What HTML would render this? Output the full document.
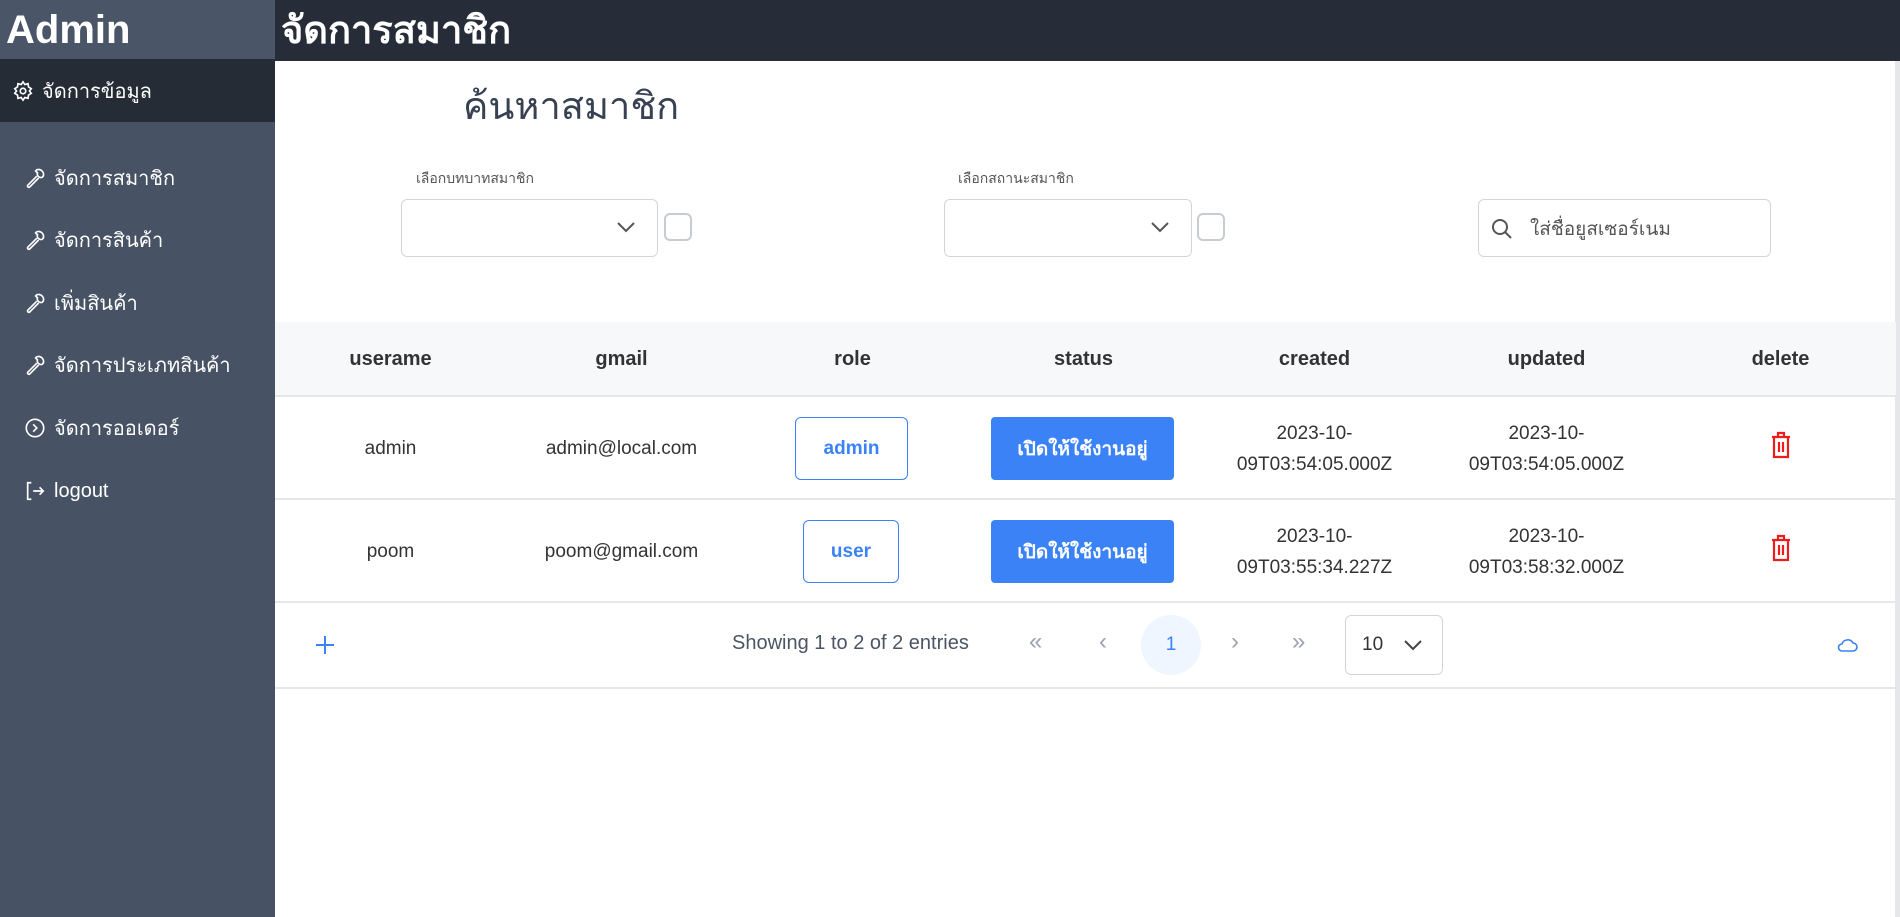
<!DOCTYPE html>
<html><head><meta charset="utf-8"><style>
*{margin:0;padding:0;box-sizing:border-box}
body{width:1900px;height:917px;position:relative;overflow:hidden;background:#fff;font-family:"Liberation Sans","Noto Sans CJK SC",sans-serif;color:#333}
.a{position:absolute}
#side{left:0;top:0;width:275px;height:917px;background:#475264}
#hdr{left:275px;top:0;width:1625px;height:61px;background:#272d38}
.mi{position:absolute;left:24px;color:#fff;font-size:20px;display:flex;align-items:center;gap:8px;height:30px}
.mi svg{width:22px;height:22px}
.th{position:absolute;top:322px;height:74px;width:231px;display:flex;align-items:center;justify-content:center;font-weight:bold;font-size:20px;color:#333}
.td{position:absolute;width:231px;display:flex;align-items:center;justify-content:center;font-size:19px;color:#333;text-align:center;line-height:31px}
.sel{position:absolute;border:1px solid #d1d5db;border-radius:6px;background:#fff}
.cb{position:absolute;border:2px solid #c7ccd3;border-radius:6px;width:28px;height:28px}
.st{position:absolute;left:991px;width:183px;height:63px;background:#3b82f6;border-radius:4px;color:#fff;font-weight:bold;font-size:19px;display:flex;align-items:center;justify-content:center}
.rl{position:absolute;border:1px solid #3b82f6;border-radius:6px;color:#3b82f6;font-weight:bold;font-size:19px;display:flex;align-items:center;justify-content:center;height:63px}
.line{position:absolute;left:275px;width:1621px;height:2px;background:#e5e7eb}
.pg{position:absolute;top:628px;color:#9ca3af;font-size:24px}
</style></head><body>
<div id="side" class="a"></div>
<div class="a" style="left:0;top:0;width:275px;height:59px;background:#4a5567"></div>
<div class="a" style="left:6px;top:8px;color:#fff;font-weight:bold;font-size:40px">Admin</div>
<div class="a" style="left:0;top:59px;width:275px;height:63px;background:#262c36"></div>
<div class="mi" style="left:12px;top:76px"><svg viewBox="0 0 24 24" fill="none" stroke="#fff" stroke-width="1.8"><circle cx="12" cy="12" r="3"/><path d="M12 2l2 3 3.5-1 .5 3.5 3 2-2 2.5 2 2.5-3 2-.5 3.5-3.5-1-2 3-2-3-3.5 1-.5-3.5-3-2 2-2.5-2-2.5 3-2 .5-3.5 3.5 1z"/></svg>จัดการข้อมูล</div>
<div class="mi" style="top:163px"><svg viewBox="0 0 24 24" fill="none" stroke="#fff" stroke-width="1.8"><path d="M14.7 6.3a4 4 0 0 0 5 5L21 10a5.5 5.5 0 0 0-7-7l-1.3 1.3zM14 10L4 20a1.5 1.5 0 0 0 2 2l10-10"/></svg>จัดการสมาชิก</div>
<div class="mi" style="top:225px"><svg viewBox="0 0 24 24" fill="none" stroke="#fff" stroke-width="1.8"><path d="M14.7 6.3a4 4 0 0 0 5 5L21 10a5.5 5.5 0 0 0-7-7l-1.3 1.3zM14 10L4 20a1.5 1.5 0 0 0 2 2l10-10"/></svg>จัดการสินค้า</div>
<div class="mi" style="top:288px"><svg viewBox="0 0 24 24" fill="none" stroke="#fff" stroke-width="1.8"><path d="M14.7 6.3a4 4 0 0 0 5 5L21 10a5.5 5.5 0 0 0-7-7l-1.3 1.3zM14 10L4 20a1.5 1.5 0 0 0 2 2l10-10"/></svg>เพิ่มสินค้า</div>
<div class="mi" style="top:350px"><svg viewBox="0 0 24 24" fill="none" stroke="#fff" stroke-width="1.8"><path d="M14.7 6.3a4 4 0 0 0 5 5L21 10a5.5 5.5 0 0 0-7-7l-1.3 1.3zM14 10L4 20a1.5 1.5 0 0 0 2 2l10-10"/></svg>จัดการประเภทสินค้า</div>
<div class="mi" style="top:413px"><svg viewBox="0 0 24 24" fill="none" stroke="#fff" stroke-width="1.8"><circle cx="12" cy="12" r="9.5"/><path d="M10 8l4 4-4 4"/></svg>จัดการออเดอร์</div>
<div class="mi" style="top:476px"><svg viewBox="0 0 24 24" fill="none" stroke="#fff" stroke-width="1.8"><path d="M8 3H4v18h4M10 12h11M17 8l4 4-4 4"/></svg>logout</div>

<div id="hdr" class="a"></div>
<div class="a" style="left:281px;top:-1px;color:#fff;font-weight:bold;font-size:38px">จัดการสมาชิก</div>
<div class="a" style="left:1895px;top:61px;width:5px;height:856px;background:#e5e7eb"></div>

<div class="a" style="left:463px;top:75px;font-size:38px;color:#374151">ค้นหาสมาชิก</div>
<div class="a" style="left:416px;top:168px;font-size:14px;color:#555">เลือกบทบาทสมาชิก</div>
<div class="sel" style="left:401px;top:199px;width:257px;height:58px"></div>
<svg class="a" style="left:616px;top:220px" width="20" height="14" viewBox="0 0 20 14"><path d="M2 3l8 8 8-8" fill="none" stroke="#555" stroke-width="2"/></svg>
<div class="cb" style="left:664px;top:213px"></div>
<div class="a" style="left:958px;top:168px;font-size:14px;color:#555">เลือกสถานะสมาชิก</div>
<div class="sel" style="left:944px;top:199px;width:248px;height:58px"></div>
<svg class="a" style="left:1150px;top:220px" width="20" height="14" viewBox="0 0 20 14"><path d="M2 3l8 8 8-8" fill="none" stroke="#555" stroke-width="2"/></svg>
<div class="cb" style="left:1197px;top:213px"></div>
<div class="sel" style="left:1478px;top:199px;width:293px;height:58px"></div>
<svg class="a" style="left:1490px;top:217px" width="24" height="24" viewBox="0 0 24 24"><circle cx="10" cy="10" r="7" fill="none" stroke="#555" stroke-width="2"/><path d="M15 15l6 6" stroke="#555" stroke-width="2"/></svg>
<div class="a" style="left:1530px;top:214px;font-size:19px;color:#555">ใส่ชื่อยูสเซอร์เนม</div>

<div class="a" style="left:275px;top:322px;width:1621px;height:74px;background:#f7f8fa"></div>
<div class="line" style="top:395px"></div>
<div class="th" style="left:275px">userame</div>
<div class="th" style="left:506px">gmail</div>
<div class="th" style="left:737px">role</div>
<div class="th" style="left:968px">status</div>
<div class="th" style="left:1199px">created</div>
<div class="th" style="left:1431px">updated</div>
<div class="th" style="left:1665px">delete</div>

<div class="td" style="left:275px;top:417px;height:63px">admin</div>
<div class="td" style="left:506px;top:417px;height:63px">admin@local.com</div>
<div class="rl" style="left:795px;top:417px;width:113px">admin</div>
<div class="st" style="top:417px">เปิดให้ใช้งานอยู่</div>
<div class="td" style="left:1199px;top:417px;height:63px">2023-10-<br>09T03:54:05.000Z</div>
<div class="td" style="left:1431px;top:417px;height:63px">2023-10-<br>09T03:54:05.000Z</div>
<div class="line" style="top:498px"></div>

<div class="td" style="left:275px;top:520px;height:63px">poom</div>
<div class="td" style="left:506px;top:520px;height:63px">poom@gmail.com</div>
<div class="rl" style="left:803px;top:520px;width:96px">user</div>
<div class="st" style="top:520px">เปิดให้ใช้งานอยู่</div>
<div class="td" style="left:1199px;top:520px;height:63px">2023-10-<br>09T03:55:34.227Z</div>
<div class="td" style="left:1431px;top:520px;height:63px">2023-10-<br>09T03:58:32.000Z</div>
<div class="line" style="top:601px"></div>

<svg class="a" style="left:1769px;top:431px" width="24" height="28" viewBox="0 0 24 28"><path d="M3 6h18M9 6V2h6v4M5 6v20h14V6M10 11v10M14 11v10" fill="none" stroke="#ef1c1c" stroke-width="2.2"/></svg>
<svg class="a" style="left:1769px;top:534px" width="24" height="28" viewBox="0 0 24 28"><path d="M3 6h18M9 6V2h6v4M5 6v20h14V6M10 11v10M14 11v10" fill="none" stroke="#ef1c1c" stroke-width="2.2"/></svg>

<svg class="a" style="left:315px;top:635px" width="20" height="20" viewBox="0 0 20 20"><path d="M10 1v18M1 10h18" stroke="#3b82f6" stroke-width="2"/></svg>
<div class="a" style="left:732px;top:632px;font-size:20px;color:#4b5563">Showing 1 to 2 of 2 entries</div>
<div class="pg" style="left:1029px">«</div>
<div class="pg" style="left:1099px">‹</div>
<div class="a" style="left:1141px;top:615px;width:60px;height:60px;border-radius:50%;background:#eff6ff;color:#3b82f6;font-size:19px;display:flex;align-items:center;justify-content:center">1</div>
<div class="pg" style="left:1231px">›</div>
<div class="pg" style="left:1292px">»</div>
<div class="sel" style="left:1345px;top:615px;width:98px;height:60px"></div>
<div class="a" style="left:1362px;top:634px;font-size:19px;color:#333">10</div>
<svg class="a" style="left:1403px;top:638px" width="20" height="14" viewBox="0 0 20 14"><path d="M2 3l8 8 8-8" fill="none" stroke="#444" stroke-width="2"/></svg>
<svg class="a" style="left:1836px;top:636px" width="22" height="18" viewBox="0 0 22 18"><path d="M6 15h11a4 4 0 0 0 0-8 6 6 0 0 0-11 1 3.5 3.5 0 0 0 0 7z" fill="none" stroke="#3b82f6" stroke-width="1.6"/></svg>
<div class="line" style="top:687px"></div>
</body></html>
